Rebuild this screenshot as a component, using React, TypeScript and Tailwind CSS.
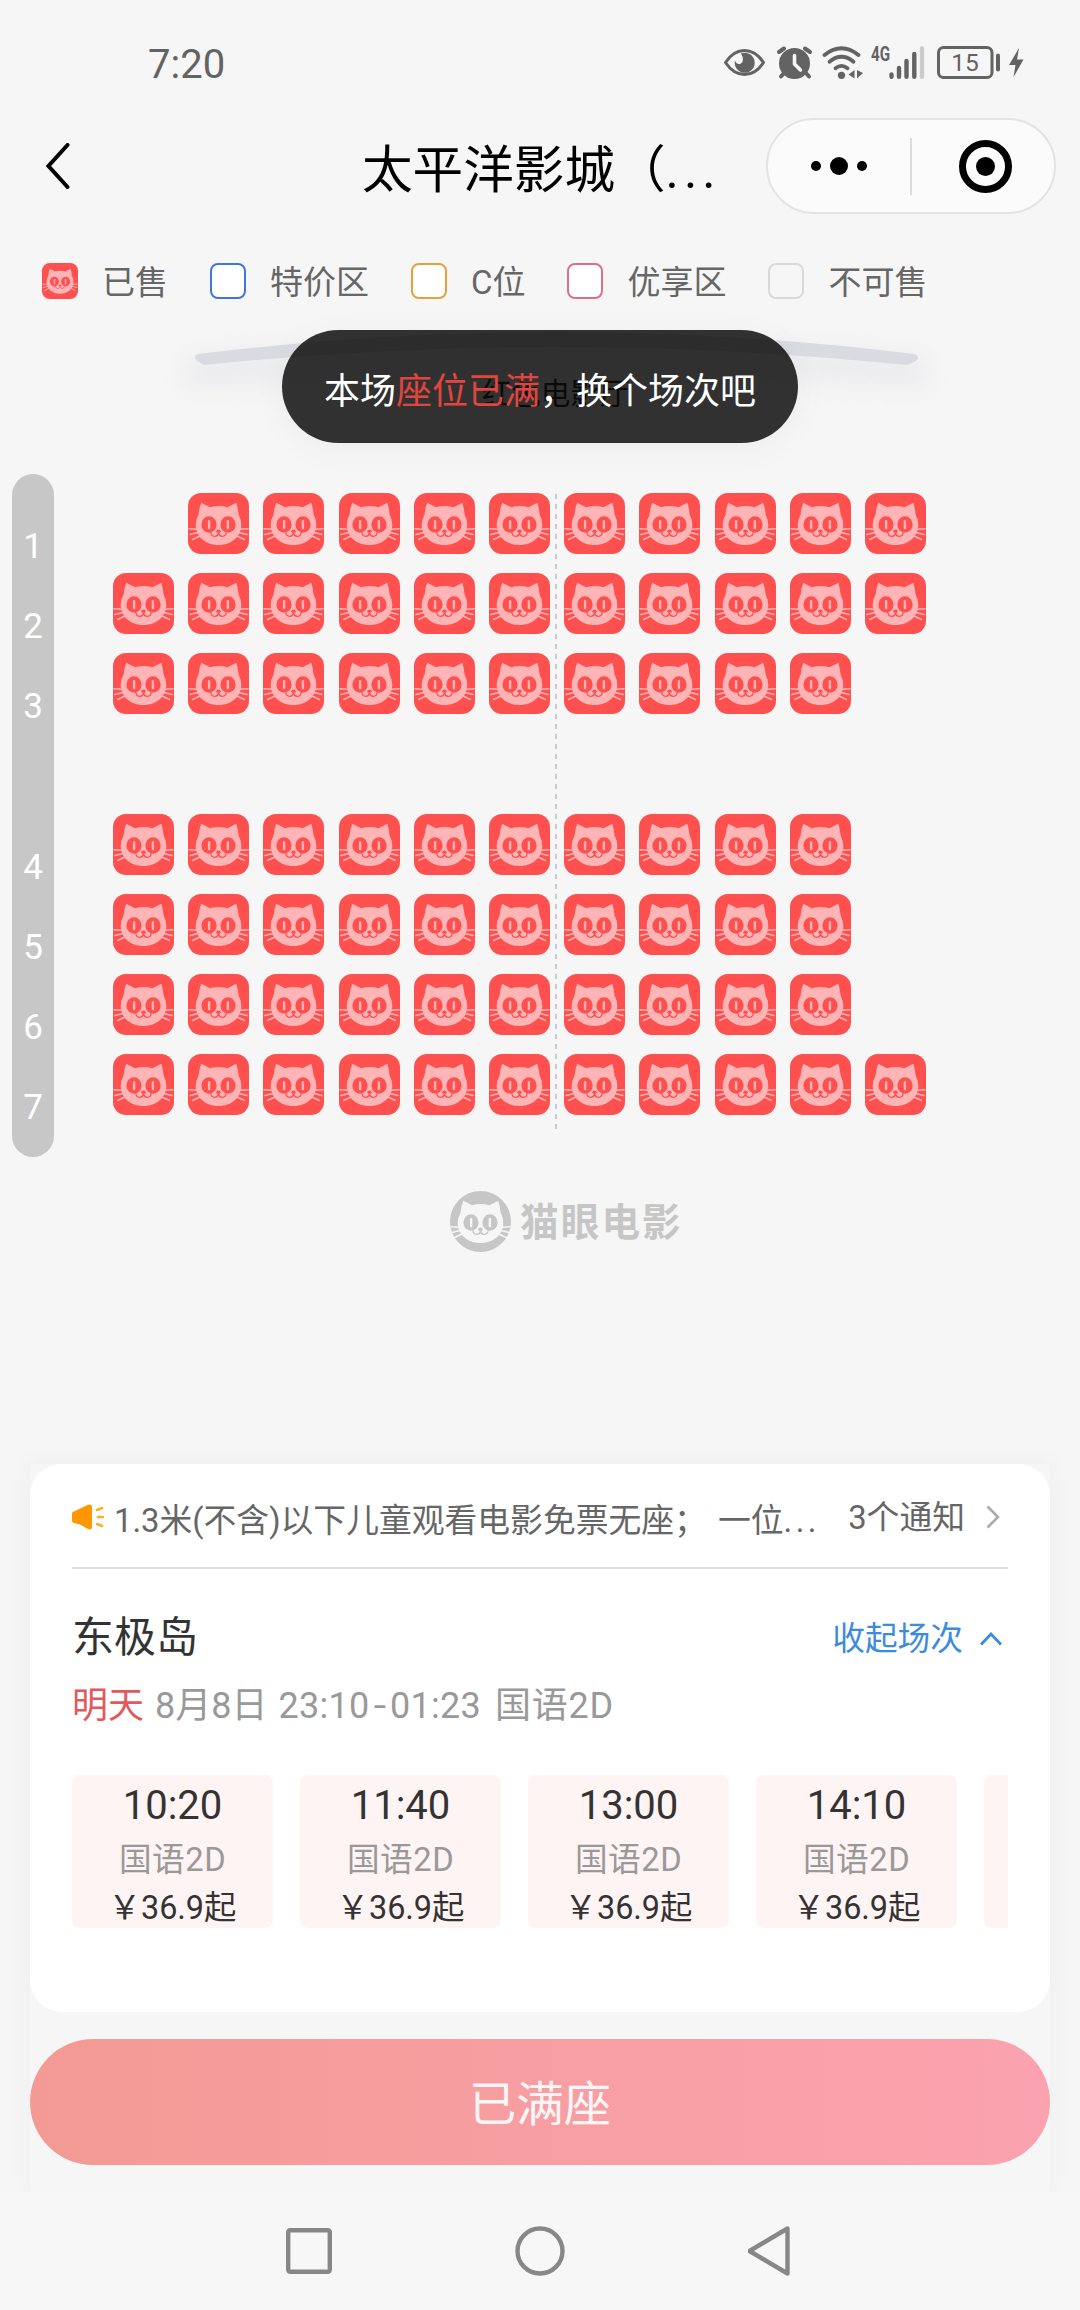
type Showtime = { time: string; lang: string; price: string }

const SHOWTIMES: Showtime[] = [
  { time: '10:20', lang: '国语2D', price: '36.9' },
  { time: '11:40', lang: '国语2D', price: '36.9' },
  { time: '13:00', lang: '国语2D', price: '36.9' },
  { time: '14:10', lang: '国语2D', price: '36.9' },
]

// '1' is a sold seat, '0' is an empty spot
const SEAT_ROWS = [
  { label: '1', seats: '01111111111' },
  { label: '2', seats: '11111111111' },
  { label: '3', seats: '11111111110' },
  { label: '', seats: '00000000000' },
  { label: '4', seats: '11111111110' },
  { label: '5', seats: '11111111110' },
  { label: '6', seats: '11111111110' },
  { label: '7', seats: '11111111111' },
]

function CatFace({ face, hole }: { face: string; hole: string }) {
  return (
    <>
      <path
        d="M13.3 9.8 L22 14.3 Q30.5 11.6 39.5 14.3 L48.3 9.8 Q50 15 50.6 21.5 Q53.3 26.5 53.3 32 C53.3 43.5 43.5 52 30.5 52 C17.5 52 7.7 43.5 7.7 32 Q7.7 26.5 10.6 21.5 Q11 15 13.3 9.8 Z"
        fill={face}
      />
      <g stroke={face} strokeWidth="1.5" strokeLinecap="round">
        <path d="M1 35.7 L9 36.3 M2 41.6 L10 39.5 M4.6 46.5 L12 43" />
        <path d="M60 35.7 L52 36.3 M59 41.6 L51 39.5 M56.4 46.5 L49 43" />
      </g>
      <ellipse cx="21" cy="31.5" rx="7.6" ry="8.2" fill={hole} />
      <ellipse cx="40" cy="31.5" rx="7.6" ry="8.2" fill={hole} />
      <rect x="19.9" y="26.9" width="2.4" height="9.4" rx="1" fill={face} />
      <rect x="38.7" y="26.9" width="2.4" height="9.4" rx="1" fill={face} />
      <ellipse cx="30.5" cy="38.3" rx="2.2" ry="1.7" fill={hole} />
      <path
        d="M22.8 39.3 C23.4 44.6 29.3 44.6 30.5 40 C31.7 44.6 37.6 44.6 38.2 39.3"
        fill="none"
        stroke={hole}
        strokeWidth="1.3"
        strokeLinecap="round"
      />
    </>
  )
}

function SoldSeat({ className }: { className: string }) {
  return (
    <svg viewBox="0 0 61 61" className={className}>
      <rect width="61" height="61" rx="13" fill="#ff5050" />
      <CatFace face="#ffb4b5" hole="#ff5050" />
    </svg>
  )
}

function StatusBar() {
  return (
    <div className="flex h-[100px] items-center justify-between pt-6 pr-[56px] pl-[148px] text-[#636363]">
      <span className="pt-[6px] text-[40px] leading-none">7:20</span>
      <svg viewBox="0 -6 300 45" className="h-[45px] w-[300px]" fill="none">
        {/* eye */}
        <path d="M1.5 16.5 C12 0.5 29 0.5 39.5 16.5 C29 32.5 12 32.5 1.5 16.5 Z" stroke="#636363" strokeWidth="3" strokeLinejoin="round" />
        <path d="M17 7.5 A10 10 0 1 1 11 14.500 Q13 19.500 17 17.500 Q21 14 17 7.500 Z" fill="#636363" />
        {/* alarm */}
        <g stroke="#636363" strokeWidth="4" strokeLinecap="round">
          <path d="M55 6 L60 2.500 M86 6 L81 2.500 M60 27 L57 30.500 M82 27 L85 30.500" />
        </g>
        <circle cx="70.500" cy="17.500" r="15.500" fill="#636363" />
        <path d="M70.500 9.500 V18 L76.500 24" stroke="#f6f6f6" strokeWidth="3.600" strokeLinecap="round" strokeLinejoin="round" />
        {/* wifi */}
        <g stroke="#636363" strokeWidth="3.800" strokeLinecap="round">
          <path d="M100.500 9 Q117.500 -4.500 134.500 9" />
          <path d="M105.500 15.700 Q117.500 5.800 129.500 15.700" />
          <path d="M111.500 22.300 Q117.500 17.500 123.500 22.300" />
        </g>
        <circle cx="117.500" cy="29.300" r="3.600" fill="#636363" />
        <path d="M130.500 24 V32.500 L124.500 28.500 Z M133 24 L139 27 L133 32.500 Z" fill="#636363" />
        <text x="147" y="15" fill="#636363" className="text-[20px] font-bold" textLength="19" lengthAdjust="spacingAndGlyphs">4G</text>
        {/* signal */}
        <g strokeWidth="4.400" strokeLinecap="round" stroke="#636363">
          <path d="M167.500 28.500 V30.800 M175 22 V30.800 M182.500 15 V30.800 M190.300 8 V30.800" />
          <path d="M198 2.500 V30.800" stroke="#cbcbcb" />
        </g>
        {/* battery */}
        <rect x="214.500" y="1.500" width="53.500" height="30" rx="5" stroke="#636363" strokeWidth="3" />
        <rect x="272" y="7.500" width="4" height="18" rx="2" fill="#636363" />
        <text x="241" y="25.300" fill="#636363" textAnchor="middle" className="text-[24.5px]">15</text>
        <path d="M295 2 L285 19 H291.500 L289.500 31 L299.500 13.500 H293 Z" fill="#636363" />
      </svg>
    </div>
  )
}

function Header() {
  return (
    <div className="grid h-[132px] grid-cols-[290px_1fr_290px] items-center px-6">
      <svg viewBox="0 0 24 46" className="ml-[22px] h-[46px] w-6" fill="none" stroke="#000" strokeWidth="4" strokeLinecap="round">
        <path d="M21.500 2 L2.500 23 L21.500 44" />
      </svg>
      <h1 className="pt-[10px] pl-[48px] text-[50.6px] leading-none whitespace-nowrap text-black">
        太平洋影城（<span className="tracking-[5px]">...</span>
      </h1>
      <div className="flex h-24 w-[290px] items-center rounded-full border-2 border-[#e3e3e3] bg-[#fbfbfb]">
        <div className="flex w-[142px] items-center justify-center gap-[9px]">
          <i className="size-[10px] rounded-full bg-black" />
          <i className="size-[18px] rounded-full bg-black" />
          <i className="size-[10px] rounded-full bg-black" />
        </div>
        <div className="h-[57px] w-[2px] bg-[#dcdcdc]" />
        <div className="flex flex-1 items-center justify-center pl-1">
          <div className="flex size-[53px] items-center justify-center rounded-full border-[7px] border-black">
            <i className="size-[19px] rounded-full bg-black" />
          </div>
        </div>
      </div>
    </div>
  )
}

function Legend() {
  return (
    <div className="flex h-[98px] items-center gap-[42px] pl-[42px] text-[33px] leading-9 whitespace-nowrap text-[#666]">
      <div className="flex items-center gap-6">
        <SoldSeat className="size-9" />
        <span className="pt-[3px]">已售</span>
      </div>
      <div className="flex items-center gap-6">
        <i className="size-9 rounded-lg border-2 border-[#4176d6] bg-white" />
        <span className="pt-[3px]">特价区</span>
      </div>
      <div className="flex items-center gap-6">
        <i className="size-9 rounded-lg border-2 border-[#e5a03a] bg-white" />
        <span className="pt-[3px]">C位</span>
      </div>
      <div className="flex items-center gap-6">
        <i className="size-9 rounded-lg border-2 border-[#dd7085] bg-white" />
        <span className="pt-[3px]">优享区</span>
      </div>
      <div className="flex items-center gap-6">
        <i className="size-9 rounded-lg border-2 border-[#d9d9d9]" />
        <span className="pt-[3px]">不可售</span>
      </div>
    </div>
  )
}

function Screen() {
  return (
    <div className="relative h-[144px]">
      <svg viewBox="0 0 800 100" className="absolute top-0 left-[156px] h-[100px] w-[800px]">
        <defs>
          <filter id="glow" x="-10%" y="-150%" width="120%" height="500%">
            <feGaussianBlur stdDeviation="14" />
          </filter>
        </defs>
        <path d="M30 30 Q400 0 770 30 L770 56 Q400 26 30 56 Z" fill="#dfe0e6" opacity="0.6" filter="url(#glow)" />
        <path d="M42 24 Q400 -20 758 24 Q765 26 760 31 L752 35 Q400 -1 48 35 L41 31 Q36 26 42 24 Z" fill="#dadbe1" />
      </svg>
      <p className="absolute top-12 right-0 left-[31px] text-center text-[29.5px] leading-8 text-[#333]">红色电影厅</p>
      <div className="absolute top-0 left-[282px] flex h-[113px] w-[516px] items-center justify-center rounded-full bg-black/80 pt-[10px] text-[36px] leading-none whitespace-nowrap text-white shadow-[0_6px_36px_rgba(0,0,0,0.04)]">
        本场<span className="text-[#e0453f]">座位已满</span>，换个场次吧
      </div>
    </div>
  )
}

function SeatMap() {
  return (
    <div className="relative flex h-[683px]">
      <div className="ml-3 flex w-[42px] flex-col rounded-full bg-[#c7c7c7] pt-[33px]">
        {SEAT_ROWS.map((row, i) => (
          <div key={i} className="h-[80.2px] text-center text-[35px] leading-[80.2px] text-white">
            {row.label}
          </div>
        ))}
      </div>
      <div className="ml-[59px] pt-[19px]">
        {SEAT_ROWS.map((row, i) => (
          <div key={i} className="flex h-[80.2px] gap-[14.2px]">
            {row.seats.split('').map((s, j) =>
              s === '1' ? <SoldSeat key={j} className="size-[61px]" /> : <div key={j} className="size-[61px]" />
            )}
          </div>
        ))}
      </div>
      <svg viewBox="0 0 2 640" className="absolute top-5 left-[555px] h-[640px] w-[2px]">
        <path d="M1 0 V640" stroke="#cacaca" strokeWidth="2" strokeDasharray="5 5" />
      </svg>
    </div>
  )
}

function Brand() {
  return (
    <div className="flex h-[307px] items-start gap-[9px] pt-[34px] pl-[450px] text-[#c6c6c6]">
      <svg viewBox="0 0 61 61" className="size-[61px]">
        <circle cx="30.500" cy="30.500" r="30.500" fill="#c6c6c6" />
        <CatFace face="#f6f6f6" hole="#c6c6c6" />
      </svg>
      <span className="pt-px text-[38.5px] leading-[61px] font-bold tracking-[2.2px] whitespace-nowrap">猫眼电影</span>
    </div>
  )
}

function SessionCard() {
  return (
    <div className="h-[548px] rounded-[32px] bg-white px-[42px]">
      <div className="flex h-[105px] items-center border-b-2 border-[#dedede] text-[32.8px] leading-9 whitespace-nowrap text-[#666]">
        <svg viewBox="0 0 32 26" className="mt-[2px] h-[26px] w-8">
          <path d="M2 7.500 L16 0.800 Q20 -0.500 20 3 V23 Q20 26.500 16 25 L8 20.500 L2 19 Q0 18.500 0 17 V9.500 Q0 8 2 7.500 Z" fill="#ff9800" />
          <path d="M25 6 L30 4 M26 13 H31 M25 20 L30 22" stroke="#ffab2e" strokeWidth="2.600" strokeLinecap="round" />
        </svg>
        <span className="pt-[10px] pl-[10px]">1.3米(不含)以下儿童观看电影免票无座；</span>
        <span className="pt-[10px] pl-[11px]">一位<span className="tracking-[3.5px]">...</span></span>
        <span className="ml-auto pt-[5px]">3个通知</span>
        <svg viewBox="0 0 14 24" className="mt-[2px] mr-[8px] ml-[21px] h-6 w-[14px]" fill="none" stroke="#aaa" strokeWidth="2.600">
          <path d="M1.500 1.500 L12 12 L1.500 22.500" />
        </svg>
      </div>
      <div className="flex h-[107px] items-center justify-between pt-[29px]">
        <h2 className="pt-[2px] text-[42px] leading-none text-[#333]">东极岛</h2>
        <div className="flex items-center pt-[3px] text-[#3d8bdd]">
          <span className="text-[32.7px] leading-9">收起场次</span>
          <svg viewBox="0 0 22 14" className="mr-[6px] ml-[17px] h-[14px] w-[22px]" fill="none" stroke="currentColor" strokeWidth="2.800">
            <path d="M1 12.500 L11 2 L21 12.500" />
          </svg>
        </div>
      </div>
      <div className="flex h-[99px] items-start gap-[11px] pt-[12px] text-[36px] leading-9 whitespace-nowrap text-[#999]">
        <span className="text-[#e4575a]">明天</span>
        <span>8月8日</span>
        <span className="tracking-[0.3px]">23:10<span className="inline-block scale-x-125 px-[5px]">-</span>01:23</span>
        <span className="pl-[3px] tracking-[0.7px]">国语2D</span>
      </div>
      <div className="flex gap-[27px] overflow-hidden">
        {SHOWTIMES.map((s) => (
          <div key={s.time} className="flex h-[153px] w-[201px] shrink-0 flex-col items-center rounded-lg bg-[#fff4f4] whitespace-nowrap text-[#333]">
            <span className="pt-[9px] text-[40px] leading-[44px]">{s.time}</span>
            <span className="pt-2 text-[32.7px] leading-[48px] tracking-[0.5px] text-[#999]">{s.lang}</span>
            <span className="text-[32.4px] leading-[48px]">￥{s.price}起</span>
          </div>
        ))}
        <div className="h-[153px] w-[201px] shrink-0 rounded-lg bg-[#fff4f4]" />
      </div>
    </div>
  )
}

function NavBar() {
  return (
    <div className="flex h-[118px] items-center justify-center gap-[183px] bg-[#f7f7f7]">
      <svg viewBox="0 0 46 46" className="size-[46px]" fill="none" stroke="#878787" strokeWidth="4.400">
        <rect x="2.200" y="2.200" width="41.600" height="41.600" rx="2" />
      </svg>
      <svg viewBox="0 0 50 50" className="size-[50px]" fill="none" stroke="#878787" strokeWidth="4.400">
        <circle cx="25" cy="25" r="22.500" />
      </svg>
      <svg viewBox="0 0 46 50" className="h-[50px] w-[46px]" fill="none" stroke="#878787" strokeWidth="4.400" strokeLinejoin="round">
        <path d="M39.500 2.500 V47.500 L1.500 25 Z" />
      </svg>
    </div>
  )
}

export default function App() {
  return (
    <div className="flex h-[2310px] w-[1080px] flex-col overflow-hidden bg-[#f6f6f6] font-[Roboto,'Noto_Sans_CJK_SC',sans-serif]">
      <StatusBar />
      <Header />
      <Legend />
      <Screen />
      <SeatMap />
      <Brand />
      <div className="mx-[30px] h-[728px] shadow-[0_0_24px_rgba(0,0,0,0.04)]">
        <SessionCard />
        <button className="mt-[27px] block h-[126px] w-full rounded-full bg-linear-to-r from-[#f49a94] to-[#fba2b0] pt-[7px] text-[47.5px] leading-none text-white/90">
          已满座
        </button>
      </div>
      <NavBar />
    </div>
  )
}
